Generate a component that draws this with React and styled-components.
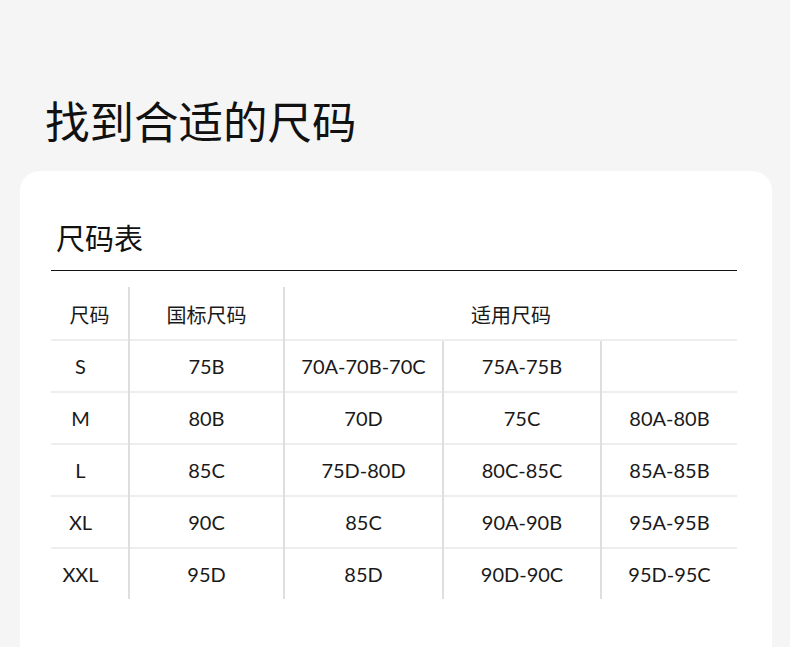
import React from 'react';
import styled, { createGlobalStyle } from 'styled-components';

const GlobalStyle = createGlobalStyle`
  html, body {
    margin: 0;
    padding: 0;
    background: #f5f5f5;
  }
  body {
    font-family: Lato, "Noto Sans CJK SC", sans-serif;
    color: #111;
  }
`;

const Page = styled.div`
  width: 790px;
  height: 647px;
  overflow: hidden;
  background: #f5f5f5;
  padding-top: 88px;
  box-sizing: border-box;
`;

const Heading = styled.h1`
  margin: 0 0 0 45px;
  font-family: "Noto Sans CJK SC", sans-serif;
  font-size: 44.5px;
  font-weight: 400;
  line-height: 64px;
  color: #111;
`;

const Card = styled.div`
  margin: 19px 18px 0 20px;
  background: #fff;
  border-radius: 20px;
  padding: 46px 35px 60px 31px;
  height: 600px;
  box-sizing: border-box;
`;

const CardTitle = styled.h2`
  margin: 0 0 0 5px;
  font-family: "Noto Sans CJK SC", sans-serif;
  font-size: 29px;
  font-weight: 400;
  line-height: 40px;
  color: #111;
`;

const Rule = styled.div`
  height: 1px;
  background: #111;
  margin-top: 13px;
`;

const Table = styled.table`
  margin-top: 14px;
  width: 686px;
  border-collapse: collapse;
  table-layout: fixed;
`;

const Cell = styled.td`
  height: 50px;
  padding: 0 ${(p) => (p.$first ? '18px' : '0')} 0 0;
  text-align: center;
  vertical-align: middle;
  font-size: 20px;
  color: #1a1a1a;
  border-top: 2px solid ${(p) => (p.$head ? 'transparent' : '#eeeeee')};
  border-left: ${(p) => (p.$first ? 'none' : '2px solid #dedede')};
  font-family: ${(p) =>
    p.$cjk ? '"Noto Sans CJK SC", sans-serif' : 'Lato, "Noto Sans CJK SC", sans-serif'};
`;

const HeadCell = styled(Cell).attrs({ as: 'th' })`
  font-weight: 400;
  height: 50px;
  padding: 2px 0 0 0;
`;

const rows = [
  ['S', '75B', '70A-70B-70C', '75A-75B', ''],
  ['M', '80B', '70D', '75C', '80A-80B'],
  ['L', '85C', '75D-80D', '80C-85C', '85A-85B'],
  ['XL', '90C', '85C', '90A-90B', '95A-95B'],
  ['XXL', '95D', '85D', '90D-90C', '95D-95C'],
];

const widths = [78, 155, 159, 158, 136];

export default function App() {
  return (
    <Page>
      <GlobalStyle />
      <Heading>找到合适的尺码</Heading>
      <Card>
        <CardTitle>尺码表</CardTitle>
        <Rule />
        <Table>
          <colgroup>
            {widths.map((w, i) => (
              <col key={i} style={{ width: w }} />
            ))}
          </colgroup>
          <thead>
            <tr>
              <HeadCell $head $first $cjk>尺码</HeadCell>
              <HeadCell $head $cjk>国标尺码</HeadCell>
              <HeadCell $head $cjk colSpan={3}>适用尺码</HeadCell>
            </tr>
          </thead>
          <tbody>
            {rows.map((r) => (
              <tr key={r[0]}>
                {r.map((v, i) => (
                  <Cell key={i} $first={i === 0}>
                    {v}
                  </Cell>
                ))}
              </tr>
            ))}
          </tbody>
        </Table>
      </Card>
    </Page>
  );
}
